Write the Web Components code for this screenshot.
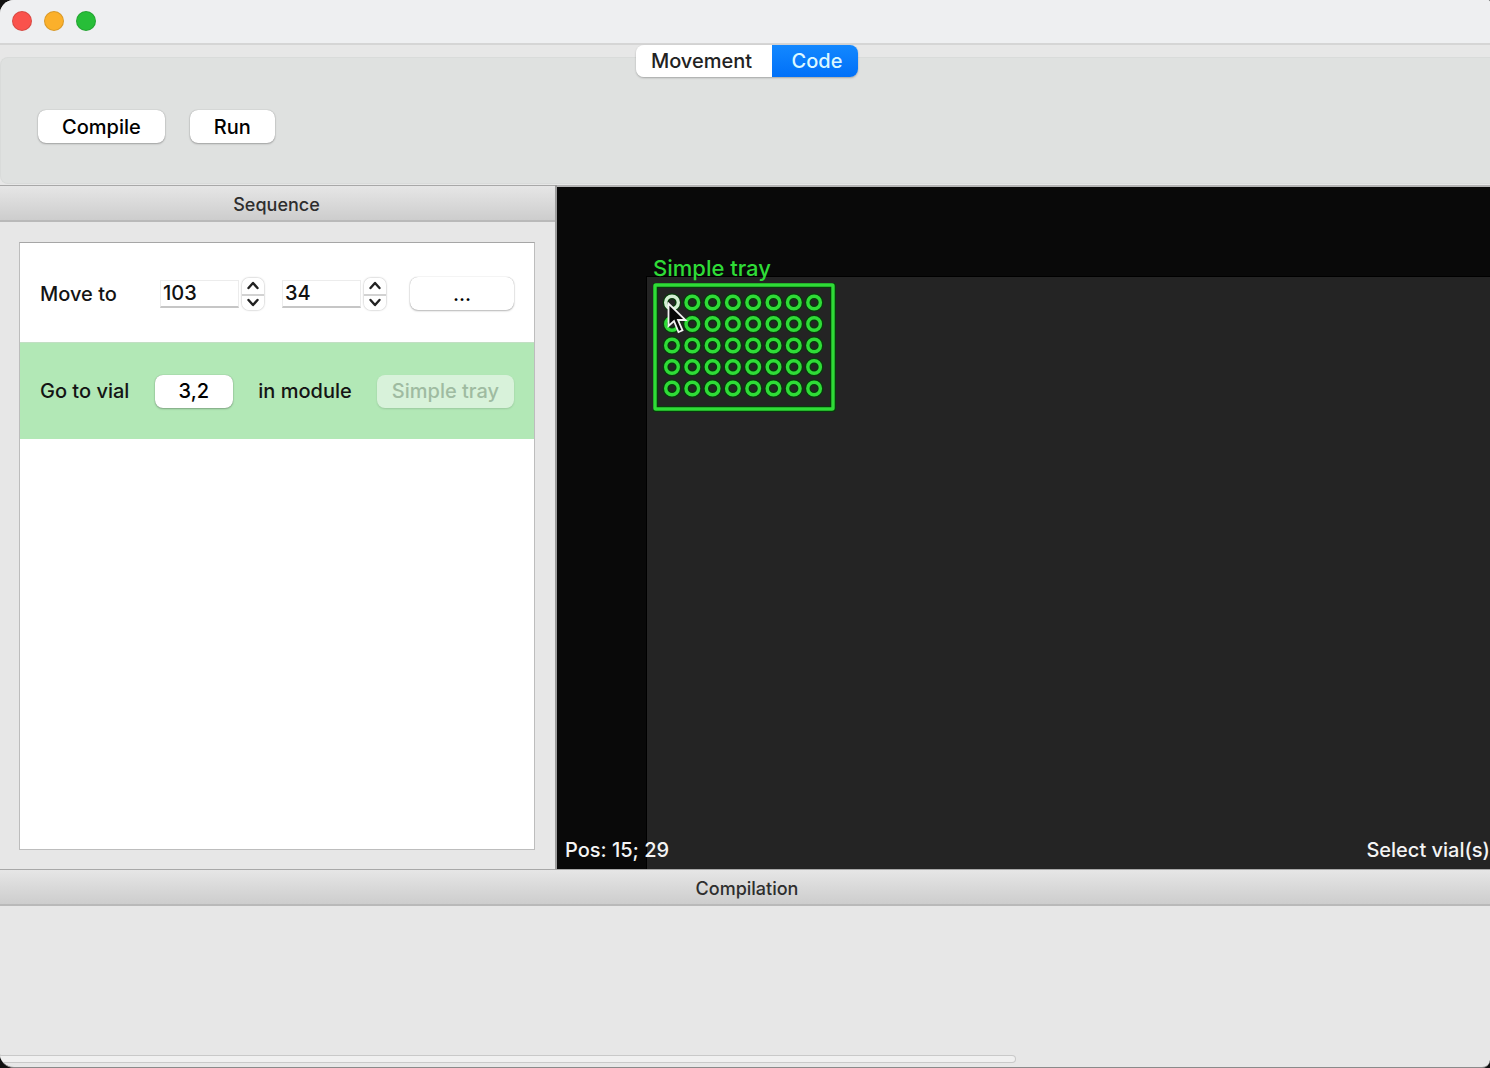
<!DOCTYPE html>
<html lang="en">
<head>
<meta charset="utf-8">
<title>Sequence editor</title>
<style>
html, body { height: 100%; }
body {
  margin: 0;
  background: #111;
  color: #141414;
  font: 450 20px/24px Inter, "Liberation Sans", sans-serif;
}
</style>
</head>
<body>
<app-window>
  <tool-area>
    <tab-switch slot="tabs"></tab-switch>
    <push-button>Compile</push-button>
    <push-button>Run</push-button>
  </tool-area>
  <split-view>
    <dock-panel slot="side" heading="Sequence">
      <sequence-list>
        <move-step x="103" y="34"></move-step>
        <vial-step vial="3,2" module="Simple tray"></vial-step>
      </sequence-list>
    </dock-panel>
    <stage-map>
      <vial-tray name="Simple tray" rows="5" columns="8"></vial-tray>
      <span slot="position">Pos: 15; 29</span>
      <span slot="hint">Select vial(s)</span>
    </stage-map>
  </split-view>
  <dock-panel class="log" heading="Compilation">
    <compile-log></compile-log>
  </dock-panel>
</app-window>

<script>
class Base extends HTMLElement {
  connectedCallback() {
    if (this.shadowRoot) return;
    this.attachShadow({ mode: "open" }).innerHTML =
      "<style>*{box-sizing:border-box}" + this.css() + "</style>" + this.html();
  }
}

customElements.define("app-window", class extends Base {
  css() { return `
    :host { display: flex; flex-direction: column; height: 100vh; box-sizing: border-box;
      background: #e7e7e7; border-radius: 14px 2px 8px 14px; border-bottom: 1px solid #8a8a8a; overflow: hidden; }
    header { display: flex; align-items: center; gap: 12px; height: 45px; padding: 0 12px 2px;
      background: #eeeff1; border-bottom: 2px solid #d5d5d5; flex: none; }
    button { width: 20px; height: 20px; padding: 0; border: 1px solid #0002; border-radius: 50%; }
    .close { background: #fa524c; } .min { background: #fbb02b; } .max { background: #27be38; }
    ::slotted(split-view) { flex: 1; min-height: 0; }`; }
  html() { return `<header>
    <button class="close" aria-label="Close"></button>
    <button class="min" aria-label="Minimize"></button>
    <button class="max" aria-label="Zoom"></button></header><slot></slot>`; }
});

customElements.define("tool-area", class extends Base {
  css() { return `
    :host { display: grid; flex: none; height: 140px; }
    .box, .tabs { grid-area: 1 / 1; }
    .box { display: flex; align-items: center; gap: 25px; margin-top: 12px; margin-bottom: 1px;
      padding: 12px 37px 0; background: #dfe1e0; border: 1px solid #d9dbda; border-right: 0; border-radius: 8px 0 0 8px; }
    .tabs { justify-self: center; align-self: start; padding-left: 4px; }`; }
  html() { return `<div class="box"><slot></slot></div><div class="tabs"><slot name="tabs"></slot></div>`; }
});

customElements.define("tab-switch", class extends Base {
  css() { return `
    :host { display: flex; border-radius: 8px; box-shadow: 0 1px 2px #0004; overflow: hidden; }
    button { font: inherit; height: 32px; border: 0; padding: 0 5px 0 0; background: #fff; color: #222; width: 136px; }
    button[aria-selected=true] { width: 86px; background: linear-gradient(#1388ff, #0070f8); color: #dcf8ff; padding: 0 0 0 4px; }`; }
  html() { return `<button role="tab" aria-selected="false">Movement</button><button role="tab" aria-selected="true">Code</button>`; }
});

customElements.define("push-button", class extends Base {
  css() { return `
    :host { display: block; }
    button { display: block; width: 100%; height: 33px; padding: 0 24px; font: inherit; color: #000;
      background: #fff; border: 0; border-radius: 8px; box-shadow: 0 0 1px #0005, 0 1px 2px #0004; }
    button:disabled { background: #d8f2da; color: #9fbba1; padding: 0 14px;
      box-shadow: 0 1px 2px #0002; }`; }
  html() { return `<button ${this.hasAttribute("disabled") ? "disabled" : ""}><slot></slot></button>`; }
});

customElements.define("split-view", class extends Base {
  css() { return `
    :host { display: flex; }
    .side { flex: none; display: flex; width: 557px; border-right: 2px solid #9c9c9c; }
    .main { flex: 1; min-width: 0; display: flex; border-top: 2px solid #b4b4b4; }
    ::slotted(*) { flex: 1; min-width: 0; }`; }
  html() { return `<div class="side"><slot name="side"></slot></div><div class="main"><slot></slot></div>`; }
});

customElements.define("dock-panel", class extends Base {
  css() { return `
    :host { display: flex; flex-direction: column; }
    h2 { margin: 0; height: 37px; flex: none; display: flex; align-items: center; justify-content: center;
      padding: 4px 2px 0 0; font-size: 18px; line-height: 24px; font-weight: 450; color: #2e2e2e;
      background: linear-gradient(#e6e6e6, #cdcdcd); border-top: 1px solid #a8a8a8; border-bottom: 2px solid #b9b9b9; }
    :host(.log) h2 { padding: 3px 0 0 4px; }
    ::slotted(*) { flex: 1 1 auto; }`; }
  html() { return `<h2>${this.getAttribute("heading")}</h2><slot></slot>`; }
});

customElements.define("sequence-list", class extends Base {
  css() { return `
    :host { display: block; margin: 20px 20px 19px 19px; background: #fff; border: 1px solid #bdbdbd; border-top-color: #a6a6a6; }`; }
  html() { return `<slot></slot>`; }
});

customElements.define("spin-box", class extends Base {
  css() { return `
    :host { display: flex; align-items: center; gap: 3px; width: 104px; }
    input { flex: 1; min-width: 0; width: 0; height: 28px; padding: 0 2px; font: inherit; color: #111; background: #fff;
      border: 1px solid #ececec; border-bottom: 2px solid #c6c6c6; appearance: textfield; }
    input::-webkit-inner-spin-button { display: none; }
    .steps { width: 22px; border-radius: 7px; box-shadow: 0 0 2px #0006; overflow: hidden; }
    button { display: block; width: 22px; height: 16px; padding: 0; border: 0; background: #fff; }
    button + button { border-top: 2px solid #d2d2d2; }
    svg { display: block; margin: auto; }
    path { fill: none; stroke: #222; stroke-width: 2.4; stroke-linecap: round; stroke-linejoin: round; }`; }
  html() { return `<input type="number" aria-label="${this.getAttribute("label")}" value="${this.getAttribute("value")}">
    <div class="steps"><button aria-label="Increase"><svg width="14" height="10"><path d="M2.5 7 7 2l4.500 5"/></svg></button><button aria-label="Decrease"><svg width="14" height="10"><path d="M2.500 2 7 7l4.500-5"/></svg></button></div>`; }
});

customElements.define("move-step", class extends Base {
  css() { return `
    :host { display: flex; align-items: center; gap: 24px; height: 99px; padding: 2px 20px 0; box-sizing: border-box; }
    .target { display: flex; gap: 18px; margin-left: auto; }
    push-button { width: 104px; }`; }
  html() { return `<span>Move to</span><div class="target">
    <spin-box label="X" value="${this.getAttribute("x")}"></spin-box>
    <spin-box label="Y" value="${this.getAttribute("y")}"></spin-box></div>
    <push-button>...</push-button>`; }
});

customElements.define("vial-step", class extends Base {
  css() { return `
    :host { display: flex; align-items: center; justify-content: space-between; height: 97px; padding: 0 20px;
      box-sizing: border-box; background: #b2e8b6; border-top: 1px solid #c2dfc4; }
    .module { width: 137px; }`; }
  html() { return `<span>Go to vial</span><push-button>${this.getAttribute("vial")}</push-button>
    <span>in module</span><push-button class="module" disabled>${this.getAttribute("module")}</push-button>`; }
});

customElements.define("stage-map", class extends Base {
  css() { return `
    :host { display: grid; position: relative; background: #090909; overflow: hidden; }
    .bed, footer { grid-area: 1 / 1; }
    .bed { margin: 89px 0 0 89px; background: #242424; border: solid #000; border-width: 1px 0 0 1px; }
    footer { align-self: end; display: flex; justify-content: space-between; padding: 0 0 7px 8px; color: #f4f4f4; z-index: 1; }
    .pointer { position: absolute; left: 110px; top: 115px; }`; }
  html() { return `<div class="bed"></div><slot></slot>
    <footer><slot name="position"></slot><slot name="hint"></slot></footer>
    <svg class="pointer" width="21" height="34"><path d="M1.500 1.500v22.500l5.500-5 4.500 11 4-1.700-4.500-10.300h7.500z" fill="#080808" stroke="#f2f2f2" stroke-width="1.800"/></svg>`; }
});

customElements.define("vial-tray", class extends Base {
  css() { return `
    :host { display: block; position: absolute; left: 96px; top: 69px; color: #2fdc37; font-size: 22px; }
    svg { display: block; margin-top: 3px; }
    rect, circle { fill: none; stroke: #2fdc37; stroke-width: 3.4; }
    .edge { stroke: #063d0a; stroke-width: 6; }
    .active { stroke: #d3efd3; }`; }
  html() {
    let rings = "";
    for (let r = 0; r < +this.getAttribute("rows"); r++)
      for (let c = 0; c < +this.getAttribute("columns"); c++) {
        const at = `cx="${19 + c * 20.3}" cy="${19.5 + r * 21.5}" r="6.3"`;
        rings += `<circle class="edge" ${at}/><circle ${r + c ? "" : 'class="active"'} ${at}/>`;
      }
    return `<div>${this.getAttribute("name")}</div><svg width="184" height="130">
      <rect class="edge" x="2" y="2" width="178" height="124" rx="1"/>
      <rect x="2" y="2" width="178" height="124" rx="1"/>${rings}</svg>`;
  }
});

customElements.define("compile-log", class extends Base {
  css() { return `
    :host { display: flex; align-items: flex-end; height: 161px; padding-bottom: 4px; box-sizing: border-box; }
    .thumb { width: 68.200%; height: 8px; border: 1px solid #c9c9c9; border-left: 0; border-radius: 0 4px 4px 0; background: #f0f0f0; }`; }
  html() { return `<div class="thumb"></div>`; }
});
</script>
</body>
</html>
